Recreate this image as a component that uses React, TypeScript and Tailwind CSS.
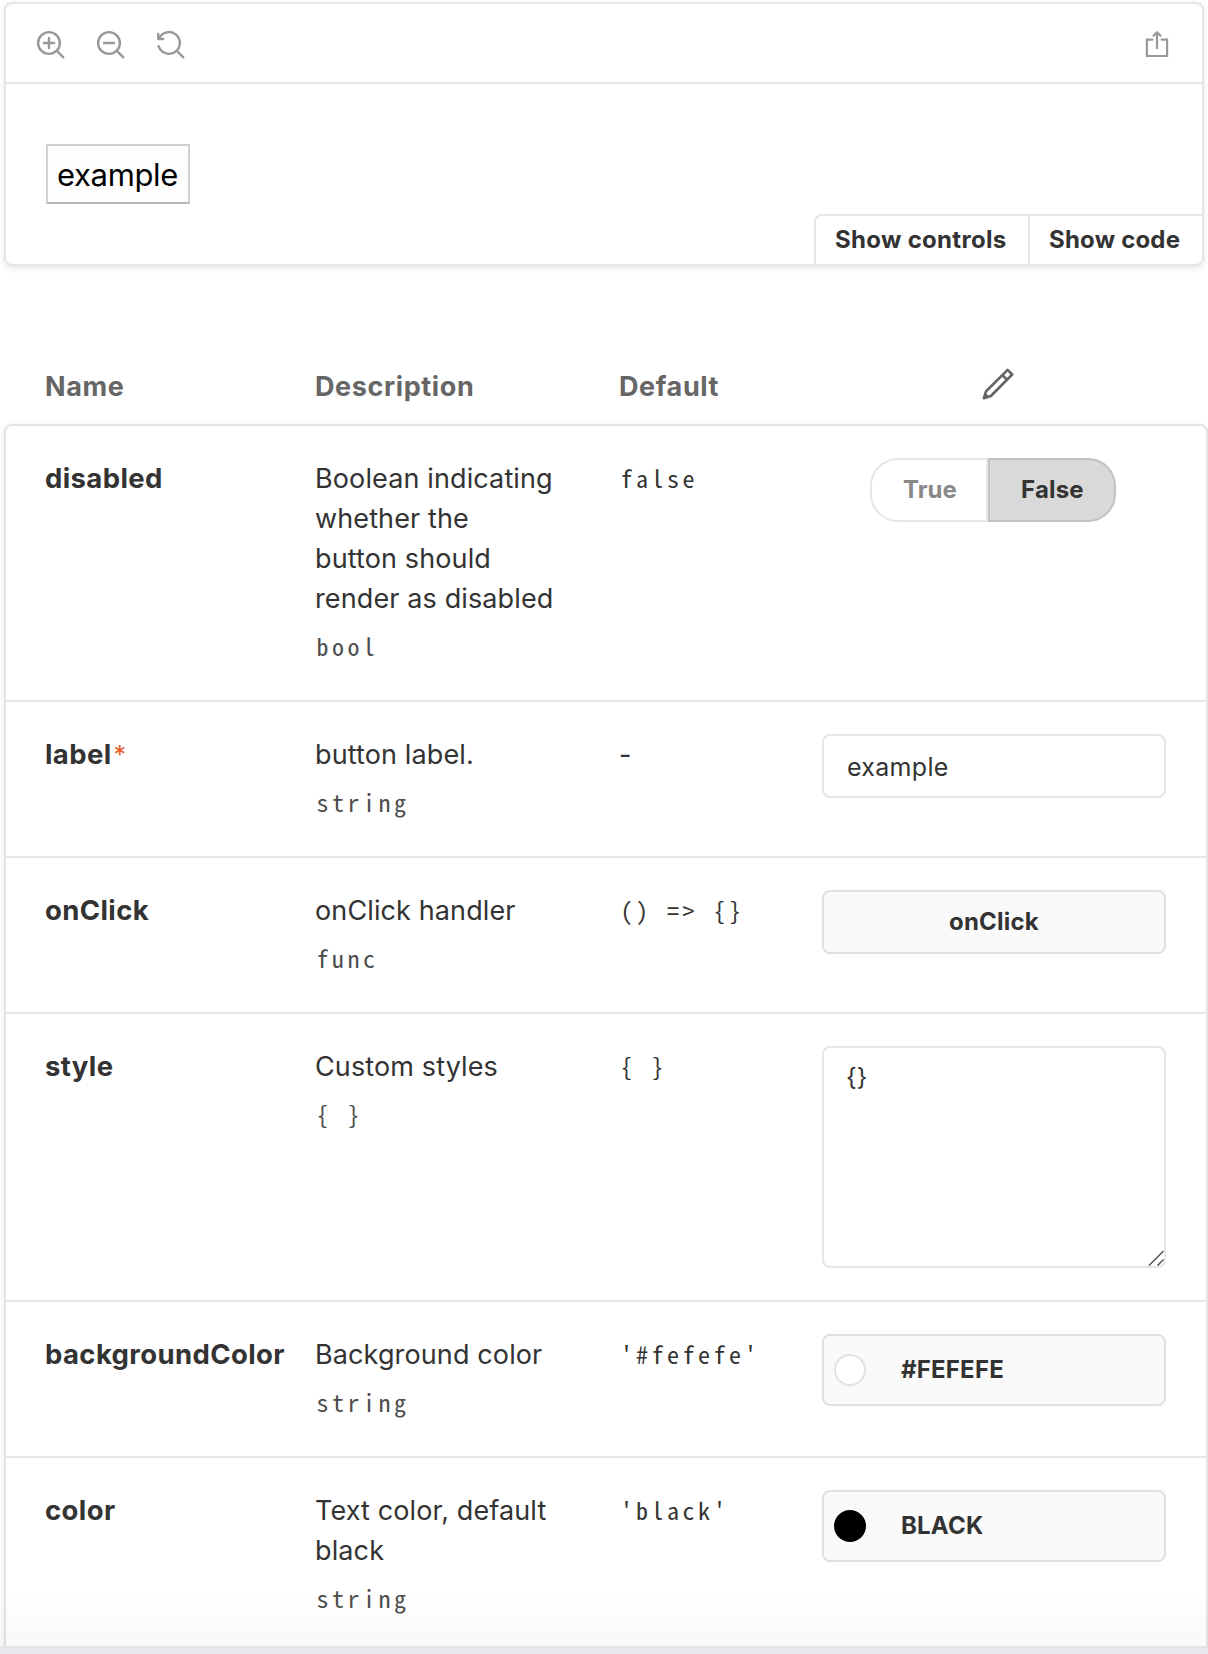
import type { ReactNode } from "react";

function ZoomInIcon() {
  return (
    <svg width="32" height="32" viewBox="0 0 32 32" fill="none" stroke="#999999" strokeWidth="2.4" strokeLinecap="round">
      <circle cx="15" cy="15" r="10.9" />
      <path d="M15 10v10M10 15h10M22.9 22.9l6.4 6.4" />
    </svg>
  );
}

function ZoomOutIcon() {
  return (
    <svg width="32" height="32" viewBox="0 0 32 32" fill="none" stroke="#999999" strokeWidth="2.4" strokeLinecap="round">
      <circle cx="15" cy="15" r="10.9" />
      <path d="M10 15h10M22.9 22.9l6.4 6.4" />
    </svg>
  );
}

function ZoomResetIcon() {
  return (
    <svg width="32" height="32" viewBox="0 0 32 32" fill="none" stroke="#999999" strokeWidth="2.4" strokeLinecap="round" strokeLinejoin="round">
      <path d="M4.6 18.2A10.9 10.9 0 1 0 5 10.6" />
      <path d="M4.2 6v5h5" />
      <path d="M22.9 22.9l6.4 6.4" />
    </svg>
  );
}

function ShareIcon() {
  return (
    <svg width="28" height="28" viewBox="0 0 28 28" fill="none" stroke="#999999" strokeWidth="2.2" strokeLinecap="round" strokeLinejoin="round">
      <path d="M9.4 10.6H3.9v16.4h20.2V10.6h-5.5" strokeLinejoin="miter" />
      <path d="M14 3.4v15.8M10.5 6.7L14 3.2l3.5 3.5" />
    </svg>
  );
}

function PencilIcon() {
  return (
    <svg width="32" height="32" viewBox="0 0 32 32" fill="none" stroke="#666666" strokeWidth="2.7" strokeLinejoin="round">
      <path d="M25.6 1.9l4.6 4.6L8.9 28l-7 2.2L4.1 23.2z" />
      <path d="M20.4 7.1l4.6 4.6" />
      <path d="M3.4 25.2l3.6 3.6-5.1 1.4z" fill="#666666" strokeWidth="1" />
    </svg>
  );
}

const mono = "font-['Noto_Sans_Mono_CJK_SC',monospace] text-[24px] tracking-[3.5px] whitespace-pre pl-[1.5px]";

function TextInput() {
  return (
    <div className="flex h-16 items-center rounded-lg border-2 border-[#e6e6e6] bg-white pt-[3px] pl-[23px] text-[25px] tracking-[0.3px]">
      example
    </div>
  );
}

function ActionButton() {
  return (
    <button className="flex h-16 w-full items-center justify-center rounded-lg border-2 border-[#e0e0e0] bg-[#fafafa] text-2xl font-bold tracking-[0.2px]">
      onClick
    </button>
  );
}

function ObjectEditor() {
  return (
    <div className="relative h-[222px] rounded-lg border-2 border-[#e6e6e6] bg-white pt-[9px] pl-[22px] text-[25px] leading-10">
      {"{}"}
      <svg className="absolute right-0 bottom-0" width="16" height="16" viewBox="0 0 16 16" stroke="#555555" strokeWidth="1.5">
        <path d="M1 15.5L15.5 1M9.5 15.5l6-6" />
      </svg>
    </div>
  );
}

function ColorButton({ swatch, children }: { swatch: string; children: ReactNode }) {
  return (
    <button className="flex h-[72px] w-full items-center rounded-lg border-2 border-[#e0e0e0] bg-[#fafafa] pl-[10px] text-2xl font-bold tracking-[0.2px]">
      <span className={`size-8 rounded-full ${swatch}`} />
      <span className="ml-[35px]">{children}</span>
    </button>
  );
}

function BooleanToggle() {
  return (
    <div className="ml-12 flex h-16 w-[246px] text-2xl font-bold">
      <div className="flex w-[118px] items-center rounded-l-[28px] border-2 border-[#e6e6e6] bg-white pl-[31px] text-[#888888]">
        True
      </div>
      <div className="flex w-32 items-center rounded-r-[28px] border-2 border-[#c2c2c2] bg-[#d9d9d9] pl-[31px] tracking-[0.2px]">
        False
      </div>
    </div>
  );
}

type Arg = {
  name: string;
  required?: boolean;
  lines: string[];
  type: string;
  def?: string;
  height: string;
  control: ReactNode;
};

const args: Arg[] = [
  {
    name: "disabled",
    lines: ["Boolean indicating", "whether the", "button should", "render as disabled"],
    type: "bool",
    def: "false",
    height: "h-[276px]",
    control: <BooleanToggle />,
  },
  { name: "label", required: true, lines: ["button label."], type: "string", height: "h-[156px]", control: <TextInput /> },
  { name: "onClick", lines: ["onClick handler"], type: "func", def: "() => {}", height: "h-[156px]", control: <ActionButton /> },
  { name: "style", lines: ["Custom styles"], type: "{ }", def: "{ }", height: "h-[288px]", control: <ObjectEditor /> },
  {
    name: "backgroundColor",
    lines: ["Background color"],
    type: "string",
    def: "'#fefefe'",
    height: "h-[156px]",
    control: <ColorButton swatch="border-2 border-[#e2e2e2] bg-white">#FEFEFE</ColorButton>,
  },
  {
    name: "color",
    lines: ["Text color, default", "black"],
    type: "string",
    def: "'black'",
    height: "h-[230px]",
    control: <ColorButton swatch="bg-black">BLACK</ColorButton>,
  },
];

function ArgRow({ arg }: { arg: Arg }) {
  return (
    <div className={`grid grid-cols-[270px_304px_203px_344px] border-b-2 border-[#e6e6e6] pt-8 pl-[39px] ${arg.height}`}>
      <div className="text-[27.5px] leading-10 font-bold tracking-[0.38px]">
        {arg.name}
        {arg.required && <span className="ml-[2px] text-[25px] font-normal text-[#ea5a2d]">*</span>}
      </div>
      <div className="pt-px">
        {arg.lines.map((line) => (
          <div key={line} className="text-[27px] leading-10 tracking-[0.12px] whitespace-nowrap">
            {line}
          </div>
        ))}
        <div className={`mt-[7px] leading-10 text-[#4d4d4d] ${mono}`}>{arg.type}</div>
      </div>
      {arg.def ? <div className={`leading-10 ${mono}`}>{arg.def}</div> : <div className="pt-px text-[27px] leading-10">-</div>}
      <div>{arg.control}</div>
    </div>
  );
}

export default function App() {
  return (
    <div className="relative h-[1654px] w-[1208px] overflow-hidden bg-white pt-0.5 font-['Inter',sans-serif] text-[#333333]">
      <section className="ml-1 flex h-[264px] w-[1200px] flex-col rounded-lg border-2 border-[#e6e6e6] bg-white shadow-[0_2px_6px_rgba(0,0,0,0.1)]">
        <div className="flex h-20 shrink-0 items-start justify-between border-b-2 border-[#e6e6e6] pt-6 pr-[31px] pl-7">
          <div className="flex gap-7">
            <ZoomInIcon />
            <ZoomOutIcon />
            <ZoomResetIcon />
          </div>
          <div className="pt-px">
            <ShareIcon />
          </div>
        </div>
        <div className="flex flex-1 flex-col items-start justify-between">
          <button className="mt-[60px] ml-10 flex h-[60px] w-36 items-center justify-center border-2 border-[#d0d0d0] border-b-[#b8b8b8] bg-[#fefefe] pt-[2px] pr-px text-[31px] tracking-[-0.35px] text-black">
            example
          </button>
          <div className="flex h-[50px] self-end rounded-tl-lg border-t-2 border-l-2 border-[#e6e6e6] text-2xl font-bold tracking-[0.3px]">
            <div className="flex w-[214px] items-center border-r-2 border-[#e6e6e6] pl-[19px]">Show controls</div>
            <div className="flex w-[172px] items-center pl-[19px] tracking-[0.2px]">Show code</div>
          </div>
        </div>
      </section>

      <div className="mt-[101px] grid h-[57px] grid-cols-[270px_304px_363px_32px] pl-[45px] text-[27px] leading-10 font-bold tracking-[0.6px] text-[#666666]">
        <div>Name</div>
        <div>Description</div>
        <div>Default</div>
        <div className="pt-px">
          <PencilIcon />
        </div>
      </div>

      <section className="ml-1 w-[1204px] rounded-t-lg border-2 border-[#e4e4e4] bg-white shadow-[0_2px_6px_rgba(0,0,0,0.1)]">
        {args.map((arg) => (
          <ArgRow key={arg.name} arg={arg} />
        ))}
      </section>

      <div className="absolute inset-x-0 bottom-0">
        <div className="h-14 bg-linear-to-b from-black/0 to-black/[0.025]" />
        <div className="h-2 border-t-2 border-[#e1e3e5] bg-[#e6e8eb]" />
      </div>
    </div>
  );
}
